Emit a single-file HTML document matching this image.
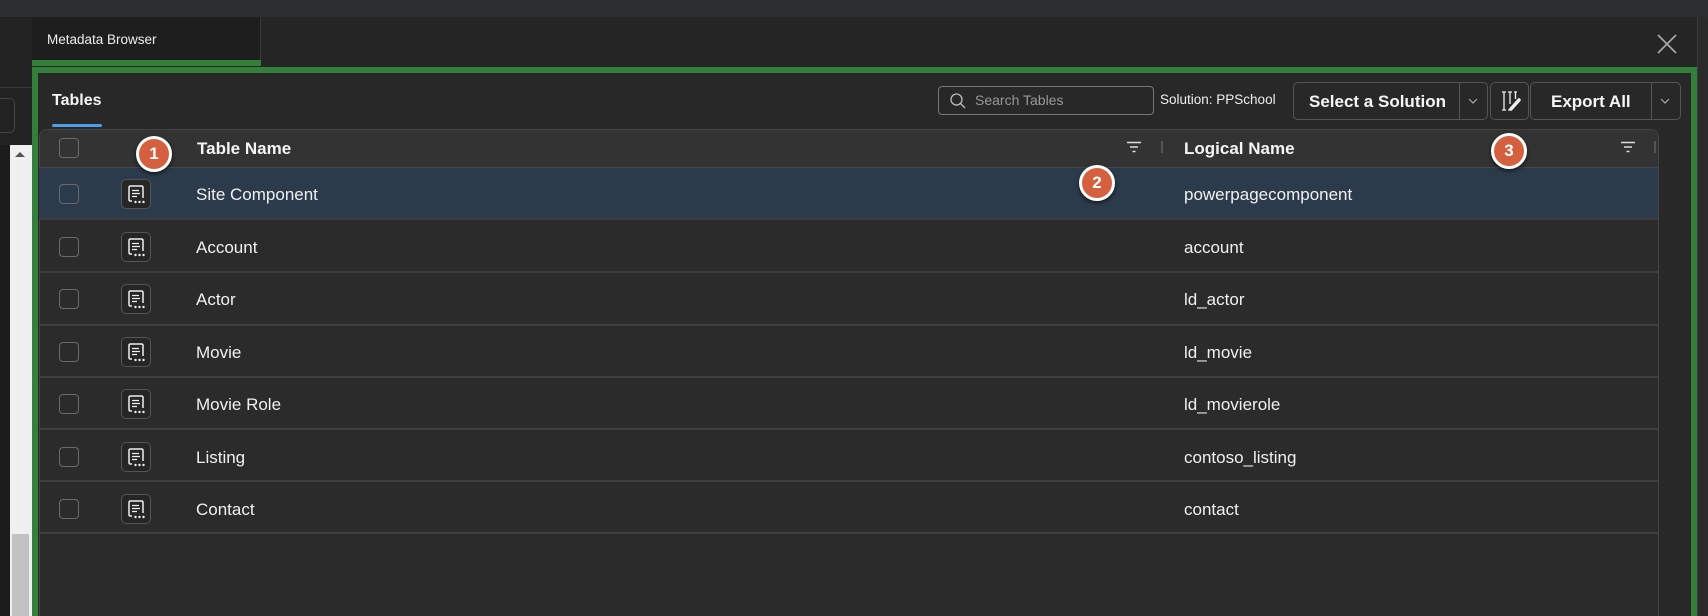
<!DOCTYPE html>
<html><head><meta charset="utf-8"><style>
*{box-sizing:border-box;margin:0;padding:0}
html,body{width:1708px;height:616px;overflow:hidden}
body{background:#252526;font-family:"Liberation Sans",sans-serif;color:#fff}
#w{position:relative;width:1708px;height:616px;overflow:hidden}
.a{position:absolute}
.cb{position:absolute;left:59px;width:20px;height:20px;border:1.5px solid #6a6a6a;border-radius:4px}
.ic{position:absolute;left:121px;width:30px;height:30px;border:1px solid #555;border-radius:5px;background:#262626}
.row{position:absolute;left:39px;width:1619px;height:53px;border-bottom:2px solid #3e3e3e}
.badge{position:absolute;width:36px;height:36px;border-radius:50%;background:#d4603f;border:3px solid #fff;color:#fff;font-weight:bold;font-size:17px;text-align:center;line-height:30px;box-shadow:0 2px 4px rgba(0,0,0,.6)}
</style></head><body><div id="w">
<div class="a" style="left:0;top:0;width:1708px;height:17px;background:#2b2d31"></div>
<div class="a" style="left:0;top:17px;width:32px;height:599px;background:#222"></div>
<div class="a" style="left:0;top:87px;width:32px;height:1px;background:#3a3a3a"></div>
<div class="a" style="left:-6px;top:98px;width:21px;height:35px;border:1px solid #444;border-radius:5px"></div>
<div class="a" style="left:0;top:145px;width:10px;height:471px;background:#1c1c1c"></div>
<div class="a" style="left:10px;top:145px;width:22px;height:471px;background:#f0f0f0"></div>
<div class="a" style="left:12px;top:534px;width:17px;height:82px;background:#c2c2c2"></div>
<div class="a" style="left:15px;top:152px;width:0;height:0;border-left:5px solid transparent;border-right:5px solid transparent;border-bottom:5px solid #555"></div>
<div class="a" style="left:32px;top:17px;width:1665px;height:52px;background:#252525"></div>
<div class="a" style="left:32px;top:17px;width:229px;height:44px;background:#1e1e1e;border-right:1px solid #3a3a3a"></div>
<div class="a" style="left:32px;top:60px;width:229px;height:6px;background:#34803b"></div>
<div class="a" style="left:47px;top:32px;font-size:13.5px;color:#eee">Metadata Browser</div>
<svg class="a" style="left:1657px;top:34px" width="20" height="20"><path d="M1 1L19 19M19 1L1 19" stroke="#aaa" stroke-width="1.6"/></svg>
<div class="a" style="left:1697px;top:17px;width:11px;height:599px;background:#2a2a2a;border-left:1px solid #3a3a3a"></div>
<div class="a" style="left:32px;top:67px;width:1665px;height:549px;border:6px solid #34803b;border-bottom:0;background:#282828"></div>
<div class="a" style="left:52px;top:92px;font-size:16px;font-weight:bold;color:#f5f5f5">Tables</div>
<div class="a" style="left:52px;top:124px;width:50px;height:3px;border-radius:2px;background:#4a9eea"></div>
<div class="a" style="left:938px;top:86px;width:216px;height:29px;border:1px solid #777;border-radius:4px"></div>
<svg class="a" style="left:949px;top:92px" width="18" height="18"><circle cx="7.5" cy="7.5" r="5.5" stroke="#bbb" stroke-width="1.3" fill="none"/><path d="M11.5 11.5L16 16" stroke="#bbb" stroke-width="1.3"/></svg>
<div class="a" style="left:975px;top:92px;font-size:14px;color:#999">Search Tables</div>
<div class="a" style="left:1160px;top:92px;font-size:13.5px;color:#eee">Solution: PPSchool</div>
<div class="a" style="left:1293px;top:82px;width:195px;height:38px;border:1px solid #555;border-radius:5px"></div>
<div class="a" style="left:1459px;top:82px;width:1px;height:38px;background:#555"></div>
<div class="a" style="left:1309px;top:92px;font-size:17px;font-weight:bold;color:#f5f5f5">Select a Solution</div>
<svg class="a" style="left:1467px;top:97px" width="12" height="8"><path d="M2 2L6 6L10 2" stroke="#aaa" stroke-width="1.2" fill="none"/></svg>
<div class="a" style="left:1490px;top:82px;width:39px;height:38px;border:1px solid #555;border-radius:5px"></div>
<svg class="a" style="left:1499px;top:89px" width="24" height="24"><path d="M3 3H7M3 21H7M5 3V21M9 3H13M9 21H12M11 3V15M15 3H18M16.5 3V10" stroke="#eee" stroke-width="1.3" fill="none"/><path d="M12 20L20 11" stroke="#eee" stroke-width="3.5" stroke-linecap="round"/></svg>
<div class="a" style="left:1530px;top:82px;width:151px;height:38px;border:1px solid #555;border-radius:5px"></div>
<div class="a" style="left:1651px;top:82px;width:1px;height:38px;background:#555"></div>
<div class="a" style="left:1551px;top:92px;font-size:17px;font-weight:bold;color:#f5f5f5">Export All</div>
<svg class="a" style="left:1659px;top:97px" width="12" height="8"><path d="M2 2L6 6L10 2" stroke="#aaa" stroke-width="1.2" fill="none"/></svg>
<div class="a" style="left:39px;top:129px;width:1620px;height:487px;border:1px solid #444;border-bottom:0;border-radius:8px 8px 0 0;background:#2b2b2b"></div>
<div class="a" style="left:40px;top:130px;width:1618px;height:38px;background:#333;border-radius:8px 8px 0 0;border-bottom:1px solid #474747"></div>
<div class="cb" style="top:138px"></div>
<div class="a" style="left:197px;top:139px;font-size:17px;font-weight:bold;color:#f5f5f5">Table Name</div>
<div class="a" style="left:1184px;top:139px;font-size:17px;font-weight:bold;color:#f5f5f5">Logical Name</div>
<svg class="a" style="left:1126px;top:141px" width="16" height="12"><path d="M1 1.5H15M4 6H12M6.5 10.5H9.5" stroke="#ddd" stroke-width="1.6"/></svg>
<div class="a" style="left:1161px;top:141px;width:2px;height:12px;background:#555"></div>
<svg class="a" style="left:1620px;top:141px" width="16" height="12"><path d="M1 1.5H15M4 6H12M6.5 10.5H9.5" stroke="#ddd" stroke-width="1.6"/></svg>
<div class="a" style="left:1654px;top:141px;width:2px;height:12px;background:#555"></div>
<div class="row" style="top:168px;background:#2c3b4b;height:52px"></div>
<div class="row" style="top:220px"></div>
<div class="row" style="top:273px"></div>
<div class="row" style="top:325px"></div>
<div class="row" style="top:377px"></div>
<div class="row" style="top:429px"></div>
<div class="row" style="top:481px"></div>
<div id="rows"></div>
<script>
var d=[["Site Component","powerpagecomponent"],["Account","account"],["Actor","ld_actor"],["Movie","ld_movie"],["Movie Role","ld_movierole"],["Listing","contoso_listing"],["Contact","contact"]];
var h="";
d.forEach(function(r,i){var c=194+i*52.5;
h+='<div class="cb" style="top:'+(c-10)+'px"></div>';
h+='<div class="ic" style="top:'+(c-15)+'px"><svg width="28" height="28" style="position:absolute;left:0;top:0"><path d="M10 21H8.5Q7 21 7 19.5V7.5Q7 6 8.5 6H19.5Q21 6 21 7.5V18" stroke="#eee" stroke-width="1.5" fill="none"/><path d="M10 10.5H17M10 13.5H18M10 16.5H15" stroke="#eee" stroke-width="1.3"/><circle cx="13.5" cy="22" r="1.2" fill="#eee"/><circle cx="17.5" cy="22" r="1.2" fill="#eee"/><circle cx="21.5" cy="22" r="1.2" fill="#eee"/></svg></div>';
h+='<div class="a" style="left:196px;top:'+(c-9)+'px;font-size:17px;color:#f0f0f0">'+r[0]+'</div>';
h+='<div class="a" style="left:1184px;top:'+(c-9)+'px;font-size:17px;color:#f0f0f0">'+r[1]+'</div>';});
document.getElementById("rows").innerHTML=h;
</script>
<div class="badge" style="left:136px;top:136px">1</div>
<div class="badge" style="left:1079px;top:165px">2</div>
<div class="badge" style="left:1491px;top:133px">3</div>
</div></body></html>
